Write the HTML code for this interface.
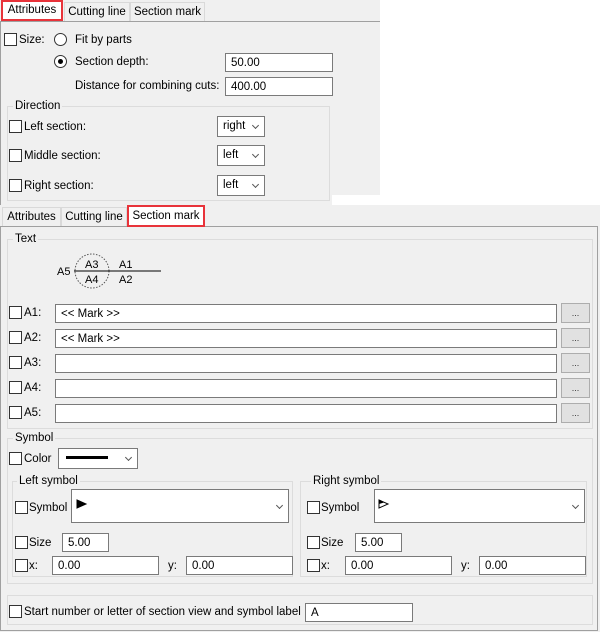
<!DOCTYPE html>
<html><head><meta charset="utf-8"><style>
*{box-sizing:border-box}
body{margin:0;width:600px;height:632px;background:#fff;position:relative;overflow:hidden;font-family:"Liberation Sans",Arial,sans-serif;font-size:11.5px;color:#000}
.a{position:absolute}
.t{position:absolute;white-space:nowrap;line-height:14px}
.cb{position:absolute;width:13px;height:13px;border:1px solid #333;background:#fff}
.in{position:absolute;background:#fff;border:1px solid #7a7a7a;height:19px;padding-left:5px;padding-top:1px;line-height:17px;white-space:nowrap}
.grp{position:absolute;border:1px solid #dcdcdc}
.gl{position:absolute;background:#f0f0f0;padding:0 2px;line-height:14px;white-space:nowrap}
.btn{position:absolute;width:29px;height:20px;background:#e1e1e1;border:1px solid #adadad;text-align:center;font-size:9px;line-height:18px;color:#333}
.sel{position:absolute;background:#fff;border:1px solid #7a7a7a;height:21px;padding-left:5px;line-height:19px}
.chev{position:absolute;right:6px;top:6px;width:5px;height:5px;border-right:1px solid #555;border-bottom:1px solid #555;transform:rotate(45deg)}
.tab{position:absolute;line-height:18px;text-align:center;border:1px solid #d9d9d9;border-bottom:none;background:#f0f0f0}
.red{border:2px solid #e8333a;background:#fff}
</style></head><body>
<!-- top panel -->
<div class="a" style="left:0;top:0;width:380px;height:205px;background:#f0f0f0"></div>
<div class="a" style="left:332px;top:195px;width:48px;height:10px;background:#fff"></div>
<div class="a" style="left:0;top:21px;width:380px;height:1px;background:#a0a0a0"></div>
<div class="a" style="left:0;top:21px;width:1px;height:184px;background:#a0a0a0"></div>
<div class="tab" style="left:64px;top:2px;width:66px;height:19px">Cutting line</div>
<div class="tab" style="left:130px;top:2px;width:75px;height:19px">Section mark</div>
<div class="tab red" style="left:1px;top:0;width:62px;height:21px;line-height:17px">Attributes</div>
<div class="cb" style="left:4px;top:33px"></div><div class="t" style="left:19px;top:33px">Size:</div>
<div class="a" style="left:54px;top:33px;width:13px;height:13px;border:1px solid #333;border-radius:50%;background:#fff"></div>
<div class="t" style="left:75px;top:33px">Fit by parts</div>
<div class="a" style="left:54px;top:55px;width:13px;height:13px;border:1px solid #333;border-radius:50%;background:#fff"><div class="a" style="left:3px;top:3px;width:5px;height:5px;border-radius:50%;background:#000"></div></div>
<div class="t" style="left:75px;top:55px">Section depth:</div>
<div class="in" style="left:225px;top:53px;width:108px">50.00</div>
<div class="t" style="left:75px;top:79px">Distance for combining cuts:</div>
<div class="in" style="left:225px;top:77px;width:108px">400.00</div>
<div class="grp" style="left:7px;top:106px;width:323px;height:95px"></div>
<div class="gl" style="left:13px;top:99px">Direction</div>
<div class="cb" style="left:9px;top:120px"></div><div class="t" style="left:24px;top:120px">Left section:</div>
<div class="sel" style="left:217px;top:116px;width:48px">right<div class="chev"></div></div>
<div class="cb" style="left:9px;top:149px"></div><div class="t" style="left:24px;top:149px">Middle section:</div>
<div class="sel" style="left:217px;top:145px;width:48px">left<div class="chev"></div></div>
<div class="cb" style="left:9px;top:179px"></div><div class="t" style="left:24px;top:179px">Right section:</div>
<div class="sel" style="left:217px;top:175px;width:48px">left<div class="chev"></div></div>

<!-- bottom panel -->
<div class="a" style="left:0;top:205px;width:600px;height:427px;background:#f0f0f0"></div>
<div class="a" style="left:0;top:226px;width:598px;height:405px;border:1px solid #a0a0a0"></div>
<div class="tab" style="left:2px;top:207px;width:59px;height:19px">Attributes</div>
<div class="tab" style="left:61px;top:207px;width:66px;height:19px">Cutting line</div>
<div class="tab red" style="left:127px;top:205px;width:78px;height:22px;line-height:18px">Section mark</div>

<div class="grp" style="left:7px;top:239px;width:586px;height:190px"></div>
<div class="gl" style="left:13px;top:232px">Text</div>
<svg class="a" style="left:50px;top:250px" width="120" height="42">
<circle cx="42" cy="21" r="17" fill="none" stroke="#555" stroke-dasharray="1.5 1.5"/>
<line x1="24" y1="21" x2="111" y2="21" stroke="#000"/>
<g font-family="Liberation Sans,Arial" font-size="11"><text x="7" y="25">A5</text><text x="35" y="18">A3</text><text x="35" y="33">A4</text><text x="69" y="18">A1</text><text x="69" y="33">A2</text></g>
</svg>
<div class="cb" style="left:9px;top:306px"></div><div class="t" style="left:24px;top:306px">A1:</div><div class="in" style="left:55px;top:304px;width:502px">&lt;&lt; Mark &gt;&gt;</div><div class="btn" style="left:561px;top:303px">...</div>
<div class="cb" style="left:9px;top:331px"></div><div class="t" style="left:24px;top:331px">A2:</div><div class="in" style="left:55px;top:329px;width:502px">&lt;&lt; Mark &gt;&gt;</div><div class="btn" style="left:561px;top:328px">...</div>
<div class="cb" style="left:9px;top:356px"></div><div class="t" style="left:24px;top:356px">A3:</div><div class="in" style="left:55px;top:354px;width:502px"></div><div class="btn" style="left:561px;top:353px">...</div>
<div class="cb" style="left:9px;top:381px"></div><div class="t" style="left:24px;top:381px">A4:</div><div class="in" style="left:55px;top:379px;width:502px"></div><div class="btn" style="left:561px;top:378px">...</div>
<div class="cb" style="left:9px;top:406px"></div><div class="t" style="left:24px;top:406px">A5:</div><div class="in" style="left:55px;top:404px;width:502px"></div><div class="btn" style="left:561px;top:403px">...</div>

<div class="grp" style="left:7px;top:438px;width:586px;height:146px"></div>
<div class="gl" style="left:13px;top:431px">Symbol</div>
<div class="cb" style="left:9px;top:452px"></div><div class="t" style="left:24px;top:452px">Color</div>
<div class="sel" style="left:58px;top:448px;width:80px"><div class="a" style="left:7px;top:7px;width:42px;height:3px;background:#000"></div><div class="chev"></div></div>

<div class="grp" style="left:12px;top:481px;width:281px;height:96px"></div>
<div class="gl" style="left:17px;top:474px">Left symbol</div>
<div class="cb" style="left:15px;top:501px"></div><div class="t" style="left:29px;top:501px">Symbol</div>
<div class="sel" style="left:71px;top:489px;width:218px;height:34px"><svg class="a" style="left:4px;top:9px" width="12" height="10"><path d="M1 1L10 5L1 9Z" fill="#000" stroke="#000"/></svg><div class="chev" style="top:13px"></div></div>
<div class="cb" style="left:15px;top:536px"></div><div class="t" style="left:29px;top:536px">Size</div>
<div class="in" style="left:62px;top:533px;width:47px">5.00</div>
<div class="cb" style="left:15px;top:559px"></div><div class="t" style="left:29px;top:559px">x:</div>
<div class="in" style="left:52px;top:556px;width:107px">0.00</div>
<div class="t" style="left:168px;top:559px">y:</div>
<div class="in" style="left:186px;top:556px;width:107px">0.00</div>

<div class="grp" style="left:300px;top:481px;width:287px;height:96px"></div>
<div class="gl" style="left:311px;top:474px">Right symbol</div>
<div class="cb" style="left:307px;top:501px"></div><div class="t" style="left:321px;top:501px">Symbol</div>
<div class="sel" style="left:374px;top:489px;width:211px;height:34px"><svg class="a" style="left:3px;top:9px" width="12" height="10"><path d="M1 1L10 5L1 9Z" fill="#fff" stroke="#000"/><path d="M1 1L6 3.5L1 5Z" fill="#000"/></svg><div class="chev" style="top:13px"></div></div>
<div class="cb" style="left:307px;top:536px"></div><div class="t" style="left:321px;top:536px">Size</div>
<div class="in" style="left:355px;top:533px;width:47px">5.00</div>
<div class="cb" style="left:307px;top:559px"></div><div class="t" style="left:321px;top:559px">x:</div>
<div class="in" style="left:345px;top:556px;width:107px">0.00</div>
<div class="t" style="left:461px;top:559px">y:</div>
<div class="in" style="left:479px;top:556px;width:107px">0.00</div>

<div class="grp" style="left:7px;top:595px;width:586px;height:30px"></div>
<div class="cb" style="left:9px;top:605px"></div><div class="t" style="left:24px;top:605px">Start number or letter of section view and symbol label</div>
<div class="in" style="left:305px;top:603px;width:108px">A</div>
</body></html>
